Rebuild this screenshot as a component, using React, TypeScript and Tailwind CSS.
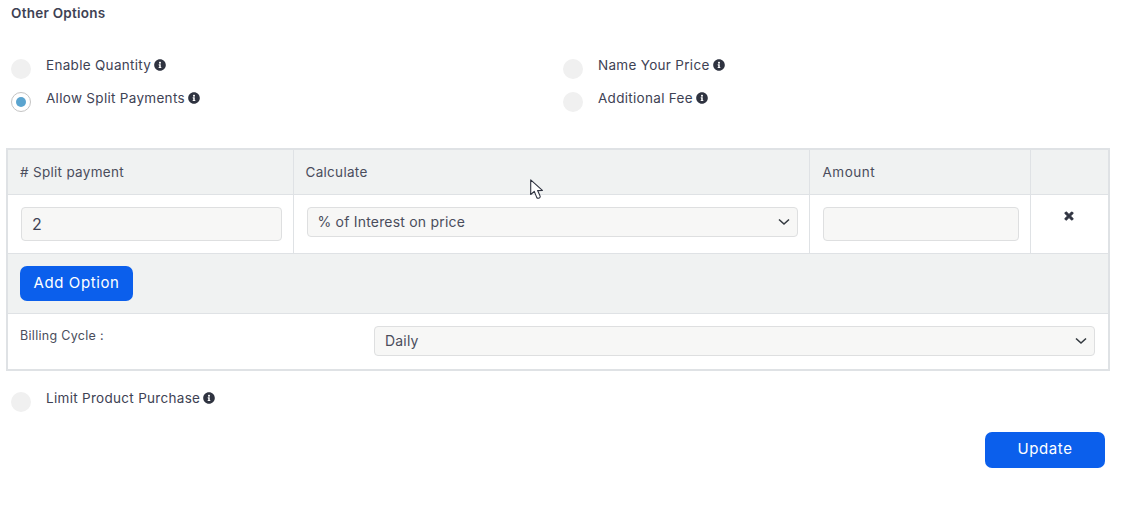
import { FaInfoCircle, FaTimes } from "react-icons/fa";

function Option({ label, checked = false }: { label: string; checked?: boolean }) {
  return (
    <div className="flex items-start h-[33px]">
      {checked ? (
        <span className="mt-[4px] w-5 h-5 rounded-full border border-[#c4c4c4] bg-white flex items-center justify-center">
          <span className="w-[10px] h-[10px] rounded-full bg-[#5ba4cf]" />
        </span>
      ) : (
        <span className="mt-[4px] w-5 h-5 rounded-full bg-[#f0f0f0]" />
      )}
      <span className="ml-[15px] flex items-center text-[13.5px] leading-[20px] tracking-[0.3px] text-[#3e4254]">
        {label}
        <FaInfoCircle className="ml-[3px] text-[12px] text-[#2f3340]" />
      </span>
    </div>
  );
}

function Chevron() {
  return (
    <svg width="12" height="8" viewBox="0 0 12 8" className="absolute right-[7px] top-1/2 -translate-y-1/2">
      <path d="M1 1.5 L6 6 L11 1.5" fill="none" stroke="#343a40" strokeWidth="1.6" />
    </svg>
  );
}

function SelectBox({ value, className }: { value: string; className: string }) {
  return (
    <div className={`relative flex items-center bg-[#f7f7f6] border border-[#dedfe0] rounded-[4px] pl-[10px] text-[14px] tracking-[0.2px] text-[#4a4d5c] ${className}`}>
      {value}
      <Chevron />
    </div>
  );
}

export default function App() {
  return (
    <div className="relative w-[1145px] h-[513px] bg-white overflow-hidden font-['Inter',sans-serif]">
      <div className="pt-[6px] pl-[11px] text-[13.5px] leading-[15px] font-semibold tracking-[0.25px] text-[#3e4254]">Other Options</div>

      <div className="grid grid-cols-[552px_1fr] pl-[11px] pt-[34px]">
        <Option label="Enable Quantity" />
        <Option label="Name Your Price" />
        <Option label="Allow Split Payments" checked />
        <Option label="Additional Fee" />
      </div>

      <div className="ml-[6px] mt-[27px] w-[1104px] border-2 border-[#dfe2e5]">
        <table className="w-full table-fixed border-collapse text-[13.5px] tracking-[0.3px] text-[#4a4d5c]">
          <colgroup>
            <col className="w-[285px]" />
            <col className="w-[516px]" />
            <col className="w-[221px]" />
            <col />
          </colgroup>
          <thead>
            <tr className="h-[44px] bg-[#f0f2f2] border-b border-[#dfe2e5]">
              <th className="font-normal text-left pl-[12px] border-r border-[#dfe2e5]"># Split payment</th>
              <th className="font-normal text-left pl-[12px] border-r border-[#dfe2e5]">Calculate</th>
              <th className="font-normal text-left pl-[13px] tracking-[0.5px] border-r border-[#dfe2e5]">Amount</th>
              <th />
            </tr>
          </thead>
          <tbody>
            <tr className="h-[59px] border-b border-[#dfe2e5]">
              <td className="pl-[13px] pr-[11px] border-r border-[#dfe2e5] align-top pt-[12px]">
                <div className="h-[34px] flex items-center bg-[#f7f7f6] border border-[#dedfe0] rounded-[4px] pl-[10px] text-[16px] text-[#3e4254]">2</div>
              </td>
              <td className="pl-[13px] pr-[11px] border-r border-[#dfe2e5] align-top pt-[12px]">
                <SelectBox value="% of Interest on price" className="h-[30px]" />
              </td>
              <td className="pl-[13px] pr-[11px] border-r border-[#dfe2e5] align-top pt-[12px]">
                <div className="h-[34px] bg-[#f7f7f6] border border-[#dedfe0] rounded-[4px]" />
              </td>
              <td className="align-top pt-[15px]">
                <FaTimes className="mx-auto text-[12px] text-[#2f3340] stroke-[40px]" />
              </td>
            </tr>
          </tbody>
        </table>

        <div className="h-[60px] bg-[#f0f2f2] border-b border-[#dfe2e5] pl-[12px] pt-[12px]">
          <button className="w-[113px] h-[35px] rounded-[7px] bg-[#0b5fec] text-white text-[15px] tracking-[0.6px]">Add Option</button>
        </div>

        <div className="h-[55px] flex items-start pl-[12px] pr-[13px] pt-[12px]">
          <span className="w-[354px] text-[12.5px] leading-[19px] tracking-[0.3px] text-[#4a4d5c]">Billing Cycle :</span>
          <SelectBox value="Daily" className="h-[30px] flex-1" />
        </div>
      </div>

      <div className="pl-[11px] mt-[17px]">
        <Option label="Limit Product Purchase" />
      </div>

      <div className="flex justify-end pr-[40px] mt-[11px]">
        <button className="w-[120px] h-[36px] rounded-[7px] bg-[#0b5fec] text-white text-[15px] tracking-[0.6px]">Update</button>
      </div>

      {/* mouse pointer caught in the screenshot */}
      <svg width="14" height="21" viewBox="0 0 14 21" className="absolute left-[530px] top-[179px]">
        <path d="M0.7 0.8 V15.5 L4.3 12.4 L6.8 18.6 Q7.4 19.6 8.6 19.2 L9.6 18.7 Q10.6 18 10.1 17 L7.6 11.6 L12.4 11.4 Z" fill="white" stroke="#2f3340" strokeWidth="1.1" strokeLinejoin="round" />
      </svg>
    </div>
  );
}
